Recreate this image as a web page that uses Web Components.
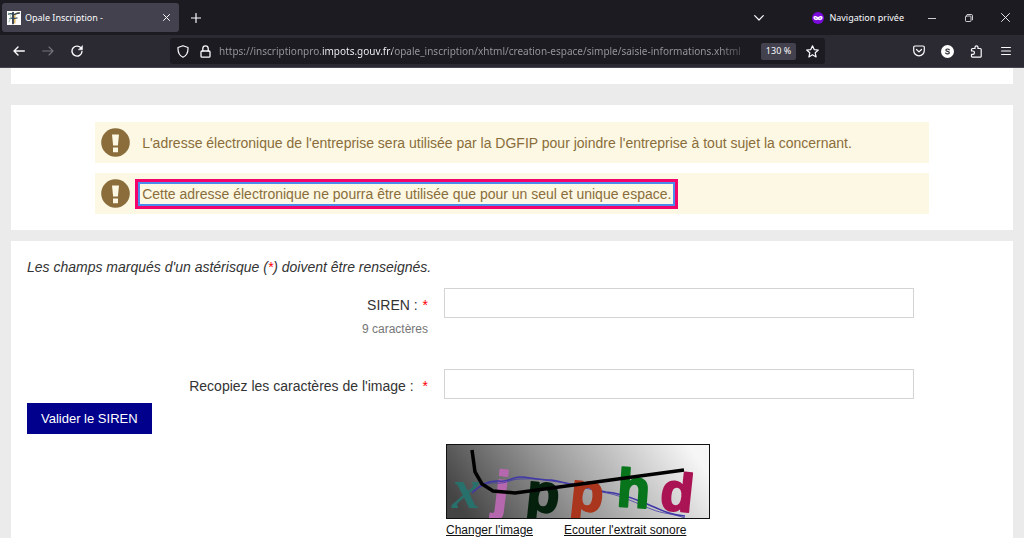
<!DOCTYPE html>
<html lang="fr">
<head>
<meta charset="utf-8">
<meta name="viewport" content="width=device-width, initial-scale=1">
<title>Opale Inscription -</title>
<style>
html,body{margin:0;height:100%}
body{display:flex;flex-direction:column;overflow:hidden;background:#ebebeb;color:#333;font:14px/20px "Liberation Sans",Arial,sans-serif}
main{flex:1;min-height:0;overflow:hidden;padding:0 11px;display:flex;flex-direction:column}
</style>
</head>
<body>
<browser-tabs>Opale Inscription -</browser-tabs>
<browser-toolbar></browser-toolbar>
<main>
  <page-panel kind="header"></page-panel>
  <page-panel kind="notices">
    <notice-box>L'adresse électronique de l'entreprise sera utilisée par la DGFIP pour joindre l'entreprise à tout sujet la concernant.</notice-box>
    <notice-box framed>Cette adresse électronique ne pourra être utilisée que pour un seul et unique espace.</notice-box>
  </page-panel>
  <page-panel kind="form"><siren-form></siren-form></page-panel>
</main>
<script>
function define(name, html) {
  const template = document.createElement('template');
  template.innerHTML = html;
  customElements.define(name, class extends HTMLElement {
    constructor() {
      super();
      this.attachShadow({ mode: 'open' }).append(template.content.cloneNode(true));
    }
  });
}

const buttonBase = `
button{all:unset;box-sizing:border-box;display:flex;align-items:center;justify-content:center;flex:none;cursor:pointer}
svg{display:block;fill:none;stroke:currentColor;stroke-linecap:round;stroke-linejoin:round}`;

define('browser-tabs', `
<style>${buttonBase}
:host{display:flex;align-items:center;flex:none;height:35px;box-sizing:border-box;padding-left:2px;background:#1c1b22;color:#fbfbfe;font:9px/14px "Noto Sans","Open Sans",sans-serif}
.tab{display:flex;align-items:center;box-sizing:border-box;width:177px;height:29px;padding:0 5px;gap:4px;background:#42414d;border-radius:3px}
.name{flex:1;white-space:nowrap}
.tab button{width:16px;height:16px}
.new{width:34px;height:28px}
.space{flex:1}
.list{width:30px;height:28px;margin-right:38px}
.private{display:flex;align-items:center;gap:5px;margin-right:9px}
.win{width:37px;height:35px}
</style>
<div class="tab">
  <svg width="14" height="14" viewBox="0 0 14 14" stroke="none"><path fill="#fff" d="M0 0h14v14H0z"/><path stroke="#dda73a" stroke-width="1.200" d="M7.800 12V5q0-3 4.200-3.200"/><path stroke="#222c36" stroke-width="1.700" d="M6 1.500v11"/><path stroke="#2f4a58" stroke-width="1.300" d="M1.500 3c2-1.500 4 1 6 .3s3-1.300 5-1.300M3 7.500c2-1 4 .5 7-.5"/><path stroke="#8fb0a0" stroke-width=".8" d="M2 2l2 4-2 5"/></svg>
  <span class="name"><slot></slot></span>
  <button aria-label="Fermer l'onglet"><svg width="7" height="7" viewBox="0 0 7 7"><path d="M.5.500l6 6M6.500.500l-6 6"/></svg></button>
</div>
<button class="new" aria-label="Nouvel onglet"><svg width="10" height="10" viewBox="0 0 10 10" stroke-width="1.200"><path d="M5 .5v9M.5 5h9"/></svg></button>
<span class="space"></span>
<button class="list" aria-label="Lister les onglets"><svg width="10" height="6" viewBox="0 0 10 6" stroke-width="1.200"><path d="M.7.700L5 5 9.300.7"/></svg></button>
<span class="private">
  <svg width="12" height="12" viewBox="0 0 12 12"><circle cx="6" cy="6" r="6" fill="#7a09dc" stroke="none"/><path stroke="#fff" stroke-width="1.500" d="M6 6.300C5 4.800 2.100 4 2.100 5.800S4.800 8 6 6.300C7.200 8 9.900 7.600 9.900 5.800S7 4.800 6 6.300z"/></svg>
  <span>Navigation privée</span>
</span>
<button class="win" aria-label="Réduire"><svg width="8" height="8" viewBox="0 0 8 8" stroke-width=".8"><path d="M0 4.500h8"/></svg></button>
<button class="win" aria-label="Restaurer"><svg width="8" height="8" viewBox="0 0 8 8" stroke-width=".8"><rect x=".5" y="2" width="5.500" height="5.500" rx=".8"/><path d="M2.200.5h4a1.300 1.300 0 0 1 1.300 1.300v4"/></svg></button>
<button class="win" aria-label="Fermer"><svg width="9" height="9" viewBox="0 0 9 9" stroke-width=".9"><path d="M.5.500l8 8M8.500.500l-8 8"/></svg></button>`);

define('browser-toolbar', `
<style>${buttonBase}
:host{display:flex;align-items:center;flex:none;box-sizing:border-box;height:33px;padding:0 4px;background:#2b2a33;border-bottom:1px solid #47464f;color:#fbfbfe;font:10px/14px "Noto Sans","Open Sans",sans-serif}
button{width:29px;height:26px}
.off{color:#75747c}
.address{flex:1;min-width:0;display:flex;align-items:center;height:26px;margin:0 79px;padding:0 2px;background:#1c1b22;border-radius:3px}
.address button{width:22px}
input{flex:1;min-width:0;height:20px;border:0;padding:0;margin:0 6px 0 3px;outline:0;font:inherit;color:#a3a2a8;
 background:linear-gradient(90deg,#9a99a0 103px,#fbfbfe 103px 173px,#9a99a0 173px calc(100% - 36px),#44434b calc(100% - 12px));
 -webkit-background-clip:text;background-clip:text;-webkit-text-fill-color:transparent}
button.zoom{width:35px;height:17px;background:#42414d;border-radius:2px;font-size:9px;margin-right:5px}
</style>
<button aria-label="Précédent"><svg width="12" height="10" viewBox="0 0 12 10" stroke-width="1.400"><path d="M11.300 5H1M5 1L1 5l4 4"/></svg></button>
<button class="off" aria-label="Suivant" disabled><svg width="12" height="10" viewBox="0 0 12 10" stroke-width="1.100"><path d="M.7 5H11M7 1l4 4-4 4"/></svg></button>
<button aria-label="Actualiser"><svg width="12" height="12" viewBox="0 0 12 12" stroke-width="1.400"><path d="M10.300 3.500A5 5 0 1 0 11 6.500"/><path fill="currentColor" stroke-width=".5" d="M11.500.8v4h-4z"/></svg></button>
<div class="address">
  <button aria-label="Protection"><svg width="12" height="13" viewBox="0 0 12 13" stroke-width="1.200"><path d="M6 .7l5 1.800C11.300 7.500 9.700 10.700 6 12.300 2.300 10.700.7 7.500 1 2.500z"/></svg></button>
  <button aria-label="Connexion sécurisée"><svg width="11" height="13" viewBox="0 0 11 13" stroke-width="1.300"><rect x="1" y="6" width="9" height="6.200" rx="1"/><path d="M2.800 6V3.500a2.700 2.700 0 0 1 5.400 0V6"/></svg></button>
  <input type="text" aria-label="Adresse" spellcheck="false" value="https://inscriptionpro.impots.gouv.fr/opale_inscription/xhtml/creation-espace/simple/saisie-informations.xhtml">
  <button class="zoom">130 %</button>
  <button aria-label="Marque-page"><svg width="13" height="13" viewBox="0 0 13 13" stroke-width="1.200"><path d="M6.500.8l1.700 3.800 4.100.4-3.100 2.800.9 4.100-3.600-2.100-3.600 2.100.9-4.100L.7 5l4.100-.4z"/></svg></button>
</div>
<button aria-label="Pocket"><svg width="12" height="12" viewBox="0 0 12 12" stroke-width="1.200"><path d="M2 1h8a1.300 1.300 0 0 1 1.300 1.300V5.500a5.300 5.300 0 0 1-10.600 0V2.300A1.300 1.300 0 0 1 2 1z"/><path d="M3.500 4.500L6 6.900l2.500-2.400"/></svg></button>
<button aria-label="Compte"><svg width="13" height="13" viewBox="0 0 13 13"><circle cx="6.500" cy="6.500" r="6.500" fill="#fff" stroke="none"/><path stroke="#2b2a33" stroke-width="1.200" d="M8.300 4.800C7.500 3.600 4.800 3.800 4.900 5.200c.1 1.500 3.400.8 3.400 2.500 0 1.500-2.800 1.600-3.600.4"/></svg></button>
<button aria-label="Extensions"><svg width="13" height="13" viewBox="0 0 13 13" stroke-width="1.200"><path d="M1.500 6V4.500q0-1 1-1H5V2.300a1.500 1.500 0 0 1 3 0v1.200h2.200q1 0 1 1v6.700q0 1-1 1h-7.700q-1 0-1-1V9.300h1.300a1.600 1.600 0 0 0 0-3.300z"/></svg></button>
<button aria-label="Menu"><svg width="10" height="10" viewBox="0 0 10 10" stroke-width="1.200"><path d="M.6 1.500h8.800M.6 5h8.800M.6 8.500h8.800"/></svg></button>`);

define('page-panel', `
<style>
:host{display:block;flex:none;box-sizing:border-box;background:#fff}
:host([kind=header]){height:16px;margin-bottom:21px}
:host([kind=notices]){display:flex;flex-direction:column;gap:10px;padding:17px 8.4% 16px;margin-bottom:11px}
:host([kind=form]){flex:1 0 auto;padding:16px 16px 0}
</style>
<slot></slot>`);

define('notice-box', `
<style>
:host{display:flex;align-items:center;box-sizing:border-box;min-height:41px;padding:0 6px;background:#fcf8e3;color:#8a6d3b}
svg{flex:none;margin-right:5px}
.text{padding:2px 4px;border:3px solid transparent}
:host([framed]) .text{border-color:#f3046b;box-shadow:inset 0 0 0 2px #4b8bee}
</style>
<svg width="29" height="29" viewBox="0 0 29 29"><circle cx="14.500" cy="14.500" r="14.300" fill="#8a6d3b"/><path fill="#fcf8e3" d="M11 6.500h7l-1.100 11h-4.800zM12 19.500h5v4.800h-5z"/></svg>
<span class="text"><slot></slot></span>`);

define('captcha-picture', `
<style>
:host{display:block}
svg{display:block;box-sizing:border-box;border:1px solid #111}
text{font:bold 54px "Liberation Sans",Arial,sans-serif;stroke-width:2;stroke-linejoin:round}
.x{font:italic bold 56px "Liberation Serif",serif;stroke:none}
</style>
<svg width="264" height="75" viewBox="0 0 262 73" role="img" aria-label="Image de vérification">
  <defs><linearGradient id="g" x1="0" y1=".6" x2="1" y2=".4"><stop stop-color="#444"/><stop offset=".45" stop-color="#999"/><stop offset="1" stop-color="#f6f6f6"/></linearGradient></defs>
  <path fill="url(#g)" d="M0 0h262v73H0z"/>
  <text class="x" x="5" y="63" fill="#28706c">x</text>
  <text x="45" y="63" fill="#b568ad" stroke="#b568ad" transform="rotate(7 45 63)">j</text>
  <g fill="none" stroke="#4038a6" stroke-width="1.500"><path d="M25 48c8-7 14-13 27-12 8 2 13-4 21-4 9 0 17 3 31 3 9 1 16 4 23 4 13 0 18 6 32 8 12 1 24 5 36 10 14 5 25 13 43 14"/><path stroke-width=".8" d="M26 46c9-5 14-9 24-8 9 1 14-4 23-4 8 0 15-1 31 2 8 1 16 2 23 5 12 1 19 5 33 7 16 3 31 11 44 16 12 5 20 4 34 9"/></g>
  <text x="78" y="65" fill="#06200e" stroke="#06200e" stroke-width="3" transform="rotate(6 78 65)">p</text>
  <text x="122" y="64" fill="#a9361d" stroke="#a9361d" transform="rotate(6 122 64)">p</text>
  <text x="169" y="61" fill="#08741b" stroke="#08741b" transform="rotate(4 169 61)">h</text>
  <text x="212" y="64" fill="#aa1454" stroke="#aa1454" transform="rotate(6 212 64)">d</text>
  <path fill="none" stroke="#000" stroke-width="3.500" d="M25 5l3 22 7 12 11 7 22 2 169-23"/>
</svg>`);

define('siren-form', `
<style>
:host{display:block}
form{margin:0}
p{margin:0;font-style:italic}
b{color:#f00;font-weight:normal}
.row{display:grid;grid-template-columns:401fr 16px 470fr 83fr;align-items:start}
.first{padding-top:11px;min-height:81px}
.label{text-align:right;padding-top:7px}
.label b{margin-left:1px}
.second b{margin-left:5px}
.hint{padding-top:6px;font-size:12px;line-height:16px;color:#767676}
input{grid-column:3;box-sizing:border-box;width:100%;height:30px;margin:0;padding:4px 8px;border:1px solid #d4d4d4;border-radius:0;font:inherit;color:inherit}
button{justify-self:start;margin-top:4px;height:31px;padding:0 13px;border:1px solid #00008c;background:#00008c;color:#fff;font:13px/20px "Liberation Sans",Arial,sans-serif}
.captcha{grid-column:3;padding:45px 2px 0;font-size:12px;line-height:14px}
.links{display:flex;gap:31px;padding-top:4px}
a{color:#111}
</style>
<form onsubmit="return false">
  <p>Les champs marqués d'un astérisque (<b>*</b>) doivent être renseignés.</p>
  <div class="row first">
    <div class="label"><label for="siren">SIREN : <b>*</b></label><div class="hint" id="hint">9 caractères</div></div>
    <input id="siren" type="text" aria-describedby="hint" required>
  </div>
  <div class="row second">
    <div class="label"><label for="copy">Recopiez les caractères de l'image : <b>*</b></label></div>
    <input id="copy" type="text" required>
  </div>
  <div class="row">
    <button type="submit">Valider le SIREN</button>
    <div class="captcha">
      <captcha-picture></captcha-picture>
      <div class="links"><a href="#image">Changer l'image</a><a href="#son">Ecouter l'extrait sonore</a></div>
    </div>
  </div>
</form>`);
</script>
</body>
</html>
